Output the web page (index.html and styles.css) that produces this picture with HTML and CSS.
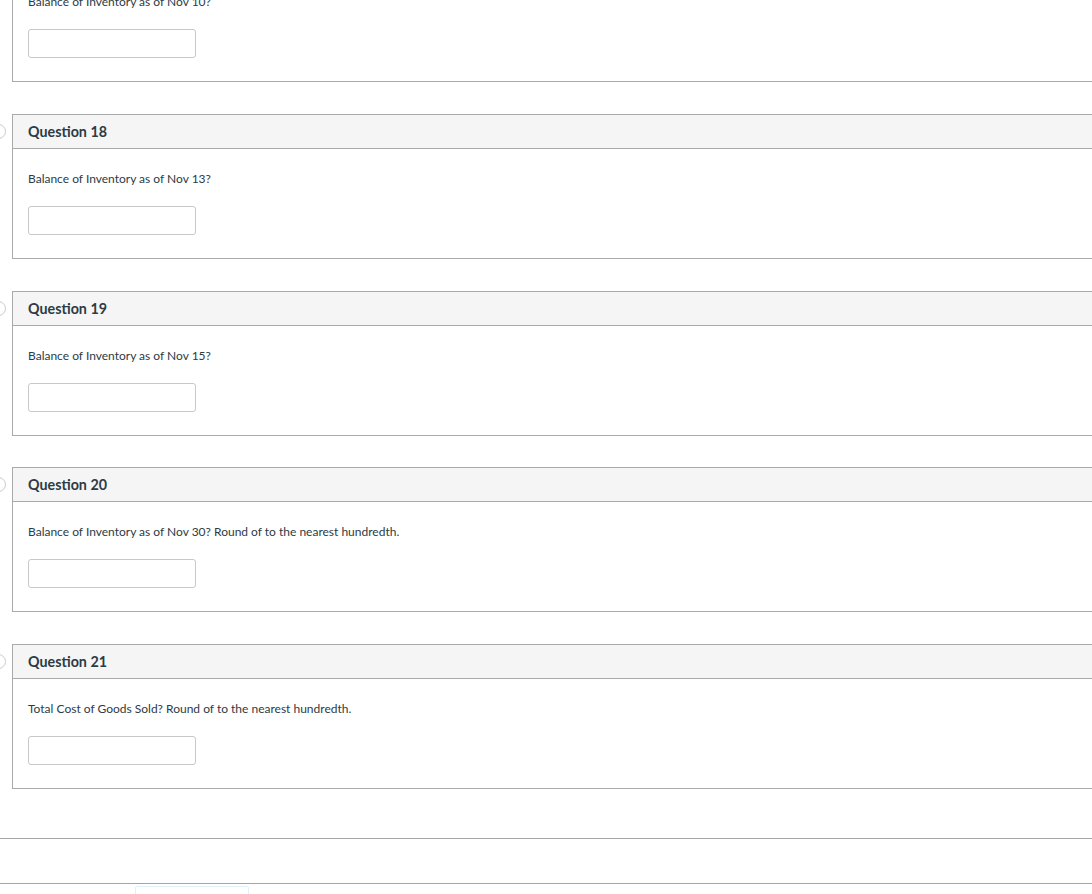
FILE: index.html
```html
<!DOCTYPE html>
<html>
<head>
<meta charset="utf-8">
<link rel="stylesheet" href="styles.css">
</head>
<body>
<div class="page">
  <div class="questions">
    <div class="question">
      <span class="flag"></span>
      <div class="q-header">Question 17</div>
      <div class="q-body">
        <p class="q-text">Balance of Inventory as of Nov 10?</p>
        <input class="q-input" type="text">
      </div>
    </div>
    <div class="question">
      <span class="flag"></span>
      <div class="q-header">Question 18</div>
      <div class="q-body">
        <p class="q-text">Balance of Inventory as of Nov 13?</p>
        <input class="q-input" type="text">
      </div>
    </div>
    <div class="question">
      <span class="flag"></span>
      <div class="q-header">Question 19</div>
      <div class="q-body">
        <p class="q-text">Balance of Inventory as of Nov 15?</p>
        <input class="q-input" type="text">
      </div>
    </div>
    <div class="question">
      <span class="flag"></span>
      <div class="q-header">Question 20</div>
      <div class="q-body">
        <p class="q-text">Balance of Inventory as of Nov 30? Round of to the nearest hundredth.</p>
        <input class="q-input" type="text">
      </div>
    </div>
    <div class="question">
      <span class="flag"></span>
      <div class="q-header">Question 21</div>
      <div class="q-body">
        <p class="q-text">Total Cost of Goods Sold? Round of to the nearest hundredth.</p>
        <input class="q-input" type="text">
      </div>
    </div>
  </div>
  <div class="footer-space"></div>
  <div class="footer-bar">
    <div class="footer-btn"></div>
  </div>
</div>
</body>
</html>
```
FILE: styles.css
```css
html, body {
  margin: 0;
  padding: 0;
  background: #fff;
  overflow: hidden;
}
body {
  font-family: Lato, "Noto Sans", "Liberation Sans", sans-serif;
  color: #2d3b45;
}
.page {
  width: 1092px;
  height: 957px;
  overflow: hidden;
  margin-top: -63px;
}
.questions {
  padding-left: 12px;
}
.question {
  position: relative;
  width: 1100px;
  border: 1px solid #aaaaaa;
  margin-bottom: 31.75px;
}
.flag {
  position: absolute;
  left: -22px;
  top: 9px;
  width: 13px;
  height: 13px;
  border: 1.5px solid #c5cdd3;
  border-radius: 50%;
}
.q-header {
  height: 33px;
  line-height: 33px;
  background: #f5f5f5;
  border-bottom: 1px solid #aaaaaa;
  padding-left: 15px;
  font-size: 14.3px;
  font-weight: 700;
}
.q-body {
  padding: 22px 15px 23px;
}
.q-text {
  margin: 0 0 19px;
  font-size: 12px;
  line-height: 16px;
}
.q-input {
  display: block;
  box-sizing: border-box;
  width: 168px;
  height: 29px;
  margin: 0;
  border: 1px solid #c8c8c8;
  border-radius: 3px;
  background: #fff;
  padding: 0 6px;
}
.footer-space {
  height: 17px;
  border-bottom: 1px solid #a5a5a5;
}
.footer-bar {
  padding-top: 44px;
}
.footer-bar::before {
  content: "";
  display: block;
  height: 1px;
  background: #a5a5a5;
}
.footer-btn {
  margin: 2px 0 0 135px;
  width: 112px;
  height: 30px;
  border: 1px solid #e0f0fb;
  border-radius: 2px;
}
```
